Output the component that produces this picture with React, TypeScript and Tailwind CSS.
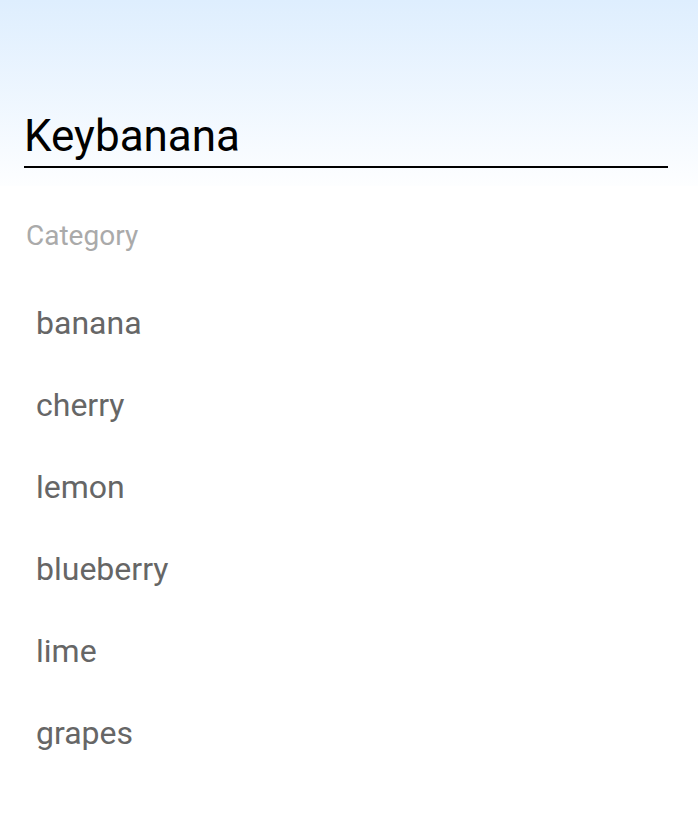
const items = ["banana", "cherry", "lemon", "blueberry", "lime", "grapes"];

export default function App() {
  return (
    <div className="min-h-[823px] w-full bg-white font-['Roboto',sans-serif]">
      <div className="flex h-[186px] flex-col justify-end bg-gradient-to-b from-[#deeefe] to-[#fdfeff] pb-[18px] pl-6 pr-[30px]">
        <div className="border-b-2 border-black pb-[4px] text-[44px] leading-[52px] text-black">
          Keybanana
        </div>
      </div>
      <div className="px-[26px] pt-[32px] text-[28px] leading-[36px] text-[#aaaaaa]">
        Category
      </div>
      <ul className="mt-[50px] px-9">
        {items.map((item) => (
          <li key={item} className="h-[82px] text-[32px] leading-[38px] text-[#666666]">
            {item}
          </li>
        ))}
      </ul>
    </div>
  );
}
